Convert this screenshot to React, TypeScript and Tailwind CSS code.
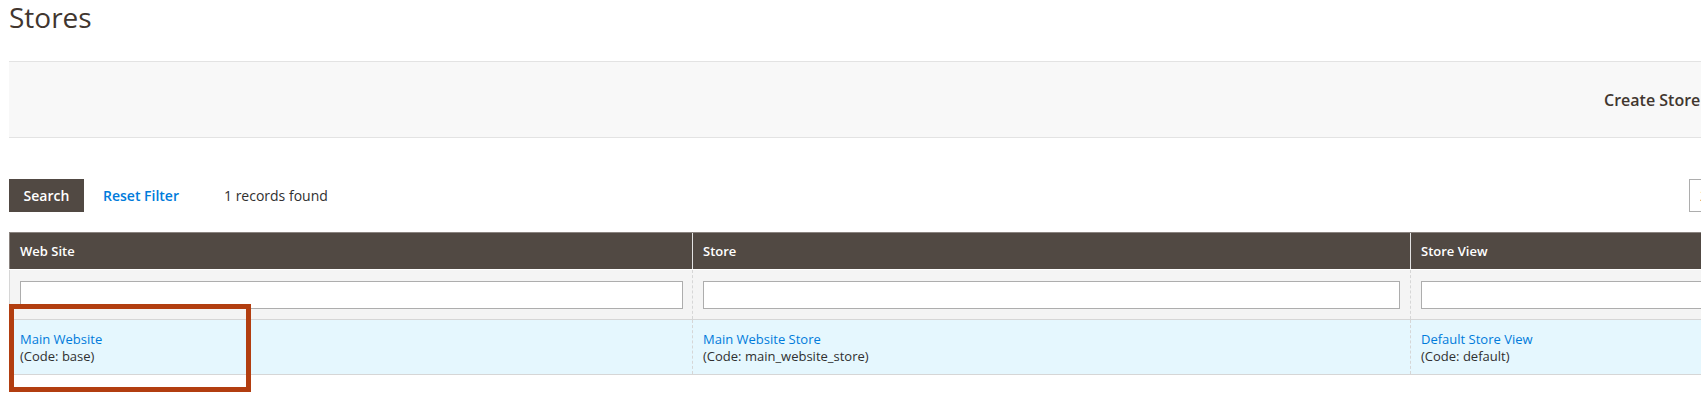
import React from "react";

const font = "font-['Open_Sans','Liberation_Sans',sans-serif]";

export default function App() {
  return (
    <div className={`w-[1701px] h-[412px] overflow-hidden bg-white ${font}`}>
      <div className="w-[2200px] pl-[9px]">
        {/* Title */}
        <div className="h-[61px]">
          <h1 className="text-[28px] leading-[34px] font-normal text-[#41362f]">Stores</h1>
        </div>

        {/* Page actions panel */}
        <div className="h-[77px] bg-[#f8f8f8] border-y border-[#e3e3e3] flex justify-end items-center">
          <div className="w-[596px] flex items-center gap-[18px]">
            <span className="text-[16px] font-semibold text-[#41362f]">Create Store</span>
            <span className="text-[16px] font-semibold text-white bg-[#eb5202] px-[15px] py-[8px] border border-[#eb5202]">
              Create Store View
            </span>
          </div>
        </div>

        {/* Search row */}
        <div className="mt-[41px] h-[33px] flex justify-between items-center">
          <div className="flex items-center h-full">
            <button className="h-[33px] w-[75px] bg-[#514943] text-white text-[14px] font-semibold">
              Search
            </button>
            <span className="ml-[19px] text-[14px] font-semibold text-[#007bdb]">Reset Filter</span>
            <span className="ml-[45px] text-[14px] text-[#303030]">1 records found</span>
          </div>
          <div className="w-[511px] h-full flex items-center">
            <div className="h-[33px] w-[70px] border border-[#adadad] bg-white text-[14px] text-[#303030] flex items-center pl-[10px]">
              20
            </div>
            <span className="ml-[10px] text-[14px] text-[#303030]">per page</span>
          </div>
        </div>

        {/* Grid */}
        <div className="relative mt-[20px] text-[13px]">
          {/* header */}
          <div className="grid grid-cols-[683px_718px_700px] bg-[#514943] border-t border-[#8a837f] text-white font-semibold">
            <div className="border-l border-[#8a837f] pl-[10px] pt-[10px] pb-[9px] leading-[17px]">Web Site</div>
            <div className="border-l border-[#e3e3e3] pl-[10px] pt-[10px] pb-[9px] leading-[17px]">Store</div>
            <div className="border-l border-[#e3e3e3] pl-[10px] pt-[10px] pb-[9px] leading-[17px]">Store View</div>
          </div>
          {/* filter row */}
          <div className="grid grid-cols-[683px_718px_700px] bg-[#f4f4f4] border-b border-[#d6d6d6] border-t border-t-white">
            <div className="border-l border-[#d6d6d6] pl-[10px] pr-[9px] pt-[11px] pb-[10px]">
              <div className="h-[28px] border border-[#adadad] bg-white" />
            </div>
            <div className="border-l border-dashed border-[#d6d6d6] pl-[10px] pr-[10px] pt-[11px] pb-[10px]">
              <div className="h-[28px] border border-[#adadad] bg-white" />
            </div>
            <div className="border-l border-dashed border-[#d6d6d6] pl-[10px] pr-[10px] pt-[11px] pb-[10px]">
              <div className="h-[28px] border border-[#adadad] bg-white" />
            </div>
          </div>
          {/* data row */}
          <div className="grid grid-cols-[683px_718px_700px] bg-[#e5f7fe] border-b border-[#d6d6d6] leading-[17px]">
            <div className="border-l border-[#d6d6d6] pl-[10px] pt-[11px] pb-[9px]">
              <div className="text-[#007bdb]">Main Website</div>
              <div className="text-[#303030]">(Code: base)</div>
            </div>
            <div className="border-l border-dashed border-[#d6d6d6] pl-[10px] pt-[11px] pb-[9px]">
              <div className="text-[#007bdb]">Main Website Store</div>
              <div className="text-[#303030]">(Code: main_website_store)</div>
            </div>
            <div className="border-l border-dashed border-[#d6d6d6] pl-[10px] pt-[11px] pb-[9px]">
              <div className="text-[#007bdb]">Default Store View</div>
              <div className="text-[#303030]">(Code: default)</div>
            </div>
          </div>

          {/* highlight annotation */}
          <div className="absolute left-0 top-[72px] w-[242px] h-[88px] border-[5px] border-[#b23e10]" />
        </div>
      </div>
    </div>
  );
}
